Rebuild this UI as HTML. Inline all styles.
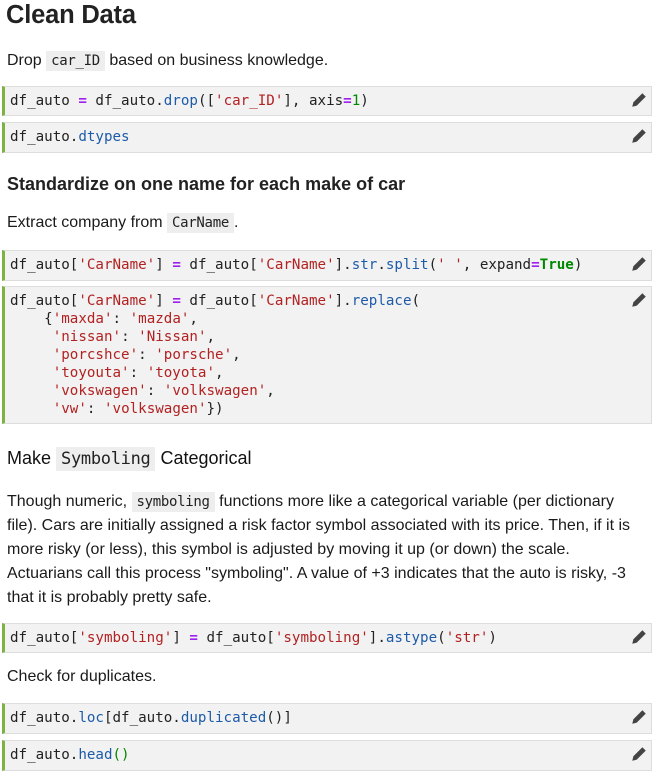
<!DOCTYPE html>
<html><head><meta charset="utf-8"><style>
body{margin:0;width:655px;height:771px;background:#fff;position:relative;overflow:hidden;font-family:"Liberation Sans",sans-serif;color:#1a1a1a}
.a{position:absolute;white-space:nowrap}
.t{font-size:16px;left:7px}
.ic{display:inline-block;background:#eee;padding:0 5px;color:#222;font-family:"DejaVu Sans Mono",monospace;font-size:14px;letter-spacing:-0.3px;line-height:20px}
.cell{position:absolute;left:2px;width:650px;background:#f2f2f2;border:1px solid #ddd;border-left:3px solid #7cb342;box-sizing:border-box}
.cell pre{margin:0;position:absolute;left:5px;top:5px;font-family:"DejaVu Sans Mono",monospace;font-size:14.2px;line-height:18px;color:#222}
.s{color:#b22222}.f{color:#1d5ba8}.o{color:#a020f0;font-weight:bold}.n{color:#080}.k{color:#080;font-weight:bold}
.pen{position:absolute;right:3px;top:4px;width:18px;height:18px}
</style></head><body>
<div class="a" style="left:6px;top:0px;font-size:25.5px;font-weight:bold;letter-spacing:-0.2px;line-height:30px;color:#222">Clean Data</div>
<div class="a t" style="top:51px">Drop <span class="ic">car_ID</span> based on business knowledge.</div>
<div class="cell" style="top:86px;height:30px"><pre>df_auto <span class="o">=</span> df_auto.<span class="f">drop</span>([<span class="s">'car_ID'</span>], axis<span class="o">=</span><span class="n">1</span>)</pre><svg class="pen" viewBox="0 0 16 16"><path d="M2 14l1-4 8-8 3 3-8 8z" fill="#444"/></svg></div>
<div class="cell" style="top:122px;height:31px"><pre>df_auto.<span class="f">dtypes</span></pre><svg class="pen" viewBox="0 0 16 16"><path d="M2 14l1-4 8-8 3 3-8 8z" fill="#444"/></svg></div>
<div class="a" style="left:7px;top:174px;font-size:18px;font-weight:bold;color:#222">Standardize on one name for each make of car</div>
<div class="a t" style="top:213px">Extract company from <span class="ic">CarName</span>.</div>
<div class="cell" style="top:250px;height:31px"><pre>df_auto[<span class="s">'CarName'</span>] <span class="o">=</span> df_auto[<span class="s">'CarName'</span>].<span class="f">str</span>.<span class="f">split</span>(<span class="s">' '</span>, expand<span class="o">=</span><span class="k">True</span>)</pre><svg class="pen" viewBox="0 0 16 16"><path d="M2 14l1-4 8-8 3 3-8 8z" fill="#444"/></svg></div>
<div class="cell" style="top:286px;height:138px"><pre>df_auto[<span class="s">'CarName'</span>] <span class="o">=</span> df_auto[<span class="s">'CarName'</span>].<span class="f">replace</span>(
    {<span class="s">'maxda'</span>: <span class="s">'mazda'</span>,
     <span class="s">'nissan'</span>: <span class="s">'Nissan'</span>,
     <span class="s">'porcshce'</span>: <span class="s">'porsche'</span>,
     <span class="s">'toyouta'</span>: <span class="s">'toyota'</span>,
     <span class="s">'vokswagen'</span>: <span class="s">'volkswagen'</span>,
     <span class="s">'vw'</span>: <span class="s">'volkswagen'</span>})</pre><svg class="pen" viewBox="0 0 16 16"><path d="M2 14l1-4 8-8 3 3-8 8z" fill="#444"/></svg></div>
<div class="a" style="left:7px;top:447px;font-size:18px;color:#111">Make <span class="ic" style="font-size:17px;letter-spacing:-0.3px;line-height:24px">Symboling</span> Categorical</div>
<div class="a t" style="top:490px;line-height:24px">Though numeric, <span class="ic">symboling</span> functions more like a categorical variable (per dictionary<br>file). Cars are initially assigned a risk factor symbol associated with its price. Then, if it is<br>more risky (or less), this symbol is adjusted by moving it up (or down) the scale.<br>Actuarians call this process "symboling". A value of +3 indicates that the auto is risky, -3<br>that it is probably pretty safe.</div>
<div class="cell" style="top:623px;height:30px"><pre>df_auto[<span class="s">'symboling'</span>] <span class="o">=</span> df_auto[<span class="s">'symboling'</span>].<span class="f">astype</span>(<span class="s">'str'</span>)</pre><svg class="pen" viewBox="0 0 16 16"><path d="M2 14l1-4 8-8 3 3-8 8z" fill="#444"/></svg></div>
<div class="a t" style="top:668px">Check for duplicates.</div>
<div class="cell" style="top:703px;height:31px"><pre>df_auto.<span class="f">loc</span>[df_auto.<span class="f">duplicated</span>()]</pre><svg class="pen" viewBox="0 0 16 16"><path d="M2 14l1-4 8-8 3 3-8 8z" fill="#444"/></svg></div>
<div class="cell" style="top:740px;height:31px"><pre>df_auto.<span class="f">head</span><span class="n">()</span></pre><svg class="pen" viewBox="0 0 16 16"><path d="M2 14l1-4 8-8 3 3-8 8z" fill="#444"/></svg></div>
</body></html>
